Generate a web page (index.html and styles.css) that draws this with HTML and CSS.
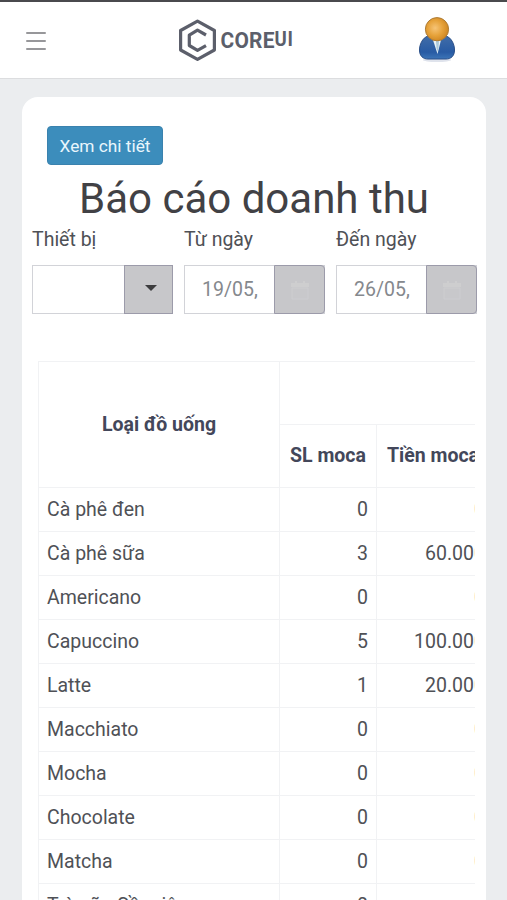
FILE: index.html
```html
<!DOCTYPE html>
<html lang="vi">
<head>
<meta charset="utf-8">
<meta name="viewport" content="width=device-width, initial-scale=1">
<title>Báo cáo doanh thu</title>
<link rel="stylesheet" href="styles.css">
</head>
<body>
<header class="topbar">
  <button class="menu" aria-label="Menu"><span></span><span></span><span></span></button>
  <svg class="logo" width="118" height="44" viewBox="0 0 118 44">
    <path class="mark" d="M20.5 3.2 L37.4 12.5 V32 L20.5 41.3 L3.6 32 V12.5 Z"/>
    <path class="mark" d="M29 17 L20.5 12.2 L12.3 17.2 V27.5 L20.5 32.3 L29 27.6"/>
    <g transform="translate(43.5 0) scale(.93 1)">
      <text class="word" x="0" y="30" textLength="58" lengthAdjust="spacing">CORE</text>
      <text class="word small" x="58" y="27.7" textLength="20" lengthAdjust="spacing">UI</text>
    </g>
  </svg>
  <svg class="avatar" width="40" height="48" viewBox="0 0 40 48">
    <defs>
      <radialGradient id="head" cx=".42" cy=".45" r=".6"><stop offset="0" stop-color="#f6c477"/><stop offset=".55" stop-color="#e6a23a"/><stop offset="1" stop-color="#ce8520"/></radialGradient>
      <linearGradient id="body" x2="0" y2="1"><stop offset="0" stop-color="#416da8"/><stop offset=".7" stop-color="#285ba4"/><stop offset="1" stop-color="#3c75b8"/></linearGradient>
    </defs>
    <ellipse cx="20" cy="44" rx="14" ry="2" fill="#dfe3ec"/>
    <path d="M11 20 C5 22 2.5 29 2.5 34 C2.5 40 6 43 11 43 H29 C34 43 37.5 40 37.5 34 C37.5 29 35 22 29 20 Z" fill="url(#body)" stroke="#2a4f88"/>
    <path d="M16 24 H24 L20.5 38 Z" fill="#e9f2f6"/>
    <path d="M19 25 H22 L21.5 32 L20.5 36 L19.5 32 Z" fill="#abc9da"/>
    <circle cx="20" cy="13.2" r="11.6" fill="url(#head)" stroke="#ad7c36"/>
  </svg>
</header>
<main class="card">
  <button class="detail">Xem chi tiết</button>
  <h1>Báo cáo doanh thu</h1>
  <form class="filters">
    <div class="field">
      <label>Thiết bị</label>
      <div class="control"><span class="value"></span><span class="addon select"><i class="caret"></i></span></div>
    </div>
    <div class="field">
      <label>Từ ngày</label>
      <div class="control"><span class="value">19/05,</span><span class="addon date"><svg width="20" height="20" viewBox="0 0 20 20"><path d="M1 3h4V1h2v2h6V1h2v2h4v4H1z" fill="#cececf"/><path d="M2 8h16v11H2z" fill="#c8c8cb" stroke="#cdcdd0"/></svg></span></div>
    </div>
    <div class="field">
      <label>Đến ngày</label>
      <div class="control"><span class="value">26/05,</span><span class="addon date"><svg width="20" height="20" viewBox="0 0 20 20"><path d="M1 3h4V1h2v2h6V1h2v2h4v4H1z" fill="#cececf"/><path d="M2 8h16v11H2z" fill="#c8c8cb" stroke="#cdcdd0"/></svg></span></div>
    </div>
  </form>
  <div class="scroller">
    <table>
      <colgroup><col class="c-name"><col class="c-count"><col class="c-money"></colgroup>
      <thead>
        <tr><th rowspan="2">Loại đồ uống</th><th colspan="2"></th></tr>
        <tr><th>SL moca</th><th class="money">Tiền moca</th></tr>
      </thead>
      <tbody>
        <tr><td>Cà phê đen</td><td>0</td><td>0</td></tr>
        <tr><td>Cà phê sữa</td><td>3</td><td>60.000</td></tr>
        <tr><td>Americano</td><td>0</td><td>0</td></tr>
        <tr><td>Capuccino</td><td>5</td><td>100.000</td></tr>
        <tr><td>Latte</td><td>1</td><td>20.000</td></tr>
        <tr><td>Macchiato</td><td>0</td><td>0</td></tr>
        <tr><td>Mocha</td><td>0</td><td>0</td></tr>
        <tr><td>Chocolate</td><td>0</td><td>0</td></tr>
        <tr><td>Matcha</td><td>0</td><td>0</td></tr>
        <tr><td>Trà sữa Sầu riêng</td><td>0</td><td>0</td></tr>
      </tbody>
    </table>
  </div>
</main>
</body>
</html>
```
FILE: styles.css
```css
* { box-sizing: border-box; }
body {
  margin: 0;
  height: 900px;
  overflow: hidden;
  background: #ebedef;
  color: #4f5156;
  font: 19.5px/24px Roboto, "Liberation Sans", sans-serif;
}
.topbar {
  display: flex;
  align-items: flex-start;
  justify-content: space-between;
  height: 79px;
  padding: 14px 50px 0 26px;
  border-top: 2px solid #4a4a4d;
  border-bottom: 1px solid #dcdddf;
  background: #fff;
}
.menu {
  display: flex;
  flex-direction: column;
  gap: 6px;
  width: 20px;
  margin-top: 16px;
  padding: 0;
  border: 0;
  background: none;
}
.menu span { height: 2px; border-radius: 1px; background: #97979a; }
.logo { margin-left: 8px; margin-top: 2px; }
.mark { fill: none; stroke: #5c5f6b; stroke-width: 3.2; stroke-linejoin: round; }
.word { fill: #5c5f6b; font: 700 22.5px Roboto, sans-serif; }
.small { font-size: 20px; }
.card {
  height: 803px;
  margin: 18px 21px 0 22px;
  padding: 29px 10px 0;
  overflow: hidden;
  border-radius: 16px 16px 0 0;
  background: #fff;
}
.detail {
  display: block;
  width: 116px;
  height: 39px;
  margin-left: 15px;
  padding: 0;
  border: 1px solid #3a82ae;
  border-radius: 4px;
  background: #3c8dbc;
  color: #e9f6fc;
  font: 17.3px/36px Roboto, sans-serif;
}
h1 {
  margin: 8px -10px 0;
  color: #414145;
  font-size: 42px;
  font-weight: 400;
  line-height: 52px;
  text-align: center;
}
.filters { display: grid; grid-template-columns: repeat(3, 141px); gap: 11px; }
label { display: block; height: 40px; line-height: 30px; }
.control { display: flex; height: 49px; border: 1px solid #d2d3d8; }
.value { flex: 1; padding-left: 17px; line-height: 47px; color: #85888d; white-space: nowrap; }
.addon {
  display: flex;
  align-items: center;
  justify-content: center;
  margin: -1px;
  border: 1px solid #9c9baa;
  background: #c7c7ca;
}
.select { width: 49px; padding-left: 5px; padding-bottom: 4px; }
.date { width: 51px; border-radius: 0 4px 4px 0; }
.caret { border: 6px solid transparent; border-top-color: #3c3c3e; border-bottom: 0; }
.scroller { margin: 47px 1px 0 6px; overflow: hidden; }
table { width: 449px; table-layout: fixed; border-collapse: collapse; }
.c-name { width: 241px; }
.c-count { width: 97px; }
.c-money { width: 111px; }
th, td { border: 1px solid #f1f2f4; white-space: nowrap; }
th { height: 63px; padding: 0; color: #43475a; font-weight: 700; }
th.money { padding-left: 2px; }
td { height: 44px; padding: 0 8px; }
td + td { text-align: right; }
td:last-child { padding-right: 2px; }
```
